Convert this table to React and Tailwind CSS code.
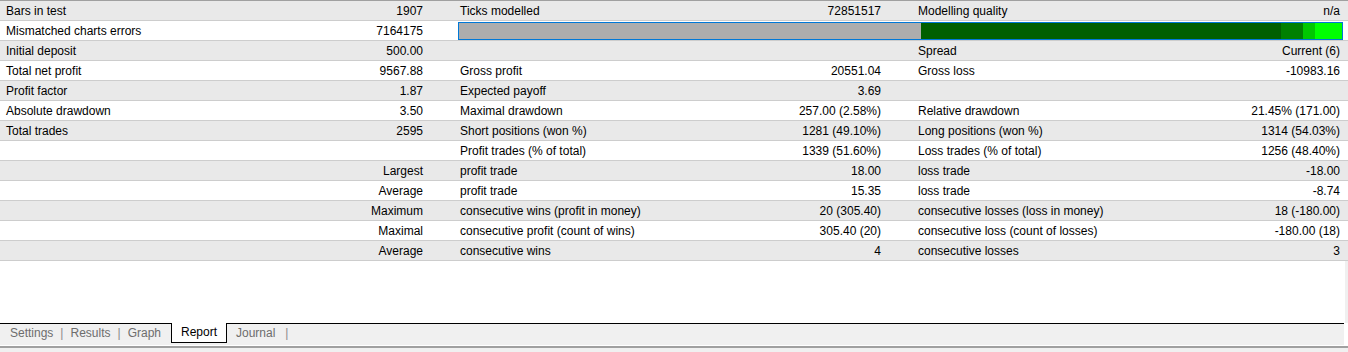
const ROWS = [
  ['Bars in test', '1907', 'Ticks modelled', '72851517', 'Modelling quality', 'n/a'],
  ['Mismatched charts errors', '7164175', null],
  ['Initial deposit', '500.00', '', '', 'Spread', 'Current (6)'],
  ['Total net profit', '9567.88', 'Gross profit', '20551.04', 'Gross loss', '-10983.16'],
  ['Profit factor', '1.87', 'Expected payoff', '3.69', '', ''],
  ['Absolute drawdown', '3.50', 'Maximal drawdown', '257.00 (2.58%)', 'Relative drawdown', '21.45% (171.00)'],
  ['Total trades', '2595', 'Short positions (won %)', '1281 (49.10%)', 'Long positions (won %)', '1314 (54.03%)'],
  ['', '', 'Profit trades (% of total)', '1339 (51.60%)', 'Loss trades (% of total)', '1256 (48.40%)'],
  ['', 'Largest', 'profit trade', '18.00', 'loss trade', '-18.00'],
  ['', 'Average', 'profit trade', '15.35', 'loss trade', '-8.74'],
  ['', 'Maximum', 'consecutive wins (profit in money)', '20 (305.40)', 'consecutive losses (loss in money)', '18 (-180.00)'],
  ['', 'Maximal', 'consecutive profit (count of wins)', '305.40 (20)', 'consecutive loss (count of losses)', '-180.00 (18)'],
  ['', 'Average', 'consecutive wins', '4', 'consecutive losses', '3'],
]

function QualityBar() {
  // modelling quality bar: grey part + green segments
  return (
    <div className="col-span-4 ml-[4px] mr-[5px] mt-[1px] h-[18px] flex border border-[#0078d7]">
      <div className="w-[462px] bg-[#adadad]" />
      <div className="w-[360px] bg-[#005f00]" />
      <div className="w-[22px] bg-[#008000]" />
      <div className="w-[12px] bg-[#00c800]" />
      <div className="flex-1 bg-[#00ff00]" />
    </div>
  )
}

function Sep() {
  return <span className="text-[#8a8a8a]">|</span>
}

export default function App() {
  return (
    <div
      className="w-[1348px] h-[352px] bg-white flex flex-col text-[12px] text-black overflow-hidden"
      style={{ fontFamily: '"Liberation Sans", Arial, sans-serif' }}
    >
      <div className="border-t border-[#a0a0a0]">
        {ROWS.map((row, i) => (
          <div
            key={i}
            className={`grid grid-cols-[230px_224px_229px_229px_218px_1fr] h-[20px] border-b border-[#cdcdcd] ${
              i % 2 === 0 ? 'bg-[#e9e9e9]' : 'bg-white'
            }`}
          >
            <div className="pl-[6px] pt-[1px] leading-[19px] whitespace-nowrap">{row[0]}</div>
            <div className="pr-[31px] pt-[1px] text-right leading-[19px] whitespace-nowrap">{row[1]}</div>
            {row[2] === null ? (
              <QualityBar />
            ) : (
              <>
                <div className="pl-[6px] pt-[1px] leading-[19px] whitespace-nowrap">{row[2]}</div>
                <div className="pr-[31px] pt-[1px] text-right leading-[19px] whitespace-nowrap">{row[3]}</div>
                <div className="pl-[6px] pt-[1px] leading-[19px] whitespace-nowrap">{row[4]}</div>
                <div className="pr-[8px] pt-[1px] text-right leading-[19px] whitespace-nowrap">{row[5]}</div>
              </>
            )}
          </div>
        ))}
      </div>

      <div className="h-[62px] border-r-[3px] border-[#f0f0f0]" />

      {/* tab strip */}
      <div className="h-[22px] bg-[#f0f0f0] flex items-start mr-[4px] text-[#6d6d6d]">
        <div className="w-[171px] h-full border-t border-black flex gap-[7px] pl-[10px] leading-[19px]">
          <span>Settings</span>
          <Sep />
          <span>Results</span>
          <Sep />
          <span>Graph</span>
        </div>
        <div className="w-[56px] h-[20px] bg-white border-x border-b border-black text-black text-center leading-[19px]">
          Report
        </div>
        <div className="flex-1 h-full border-t border-black flex gap-[10px] pl-[9px] leading-[19px]">
          <span>Journal</span>
          <Sep />
        </div>
      </div>
      <div className="h-[1px] bg-white" />
      <div className="h-[2px] bg-[#a0a0a0]" />
      <div className="flex-1 bg-[#f0f0f0]" />
    </div>
  )
}
